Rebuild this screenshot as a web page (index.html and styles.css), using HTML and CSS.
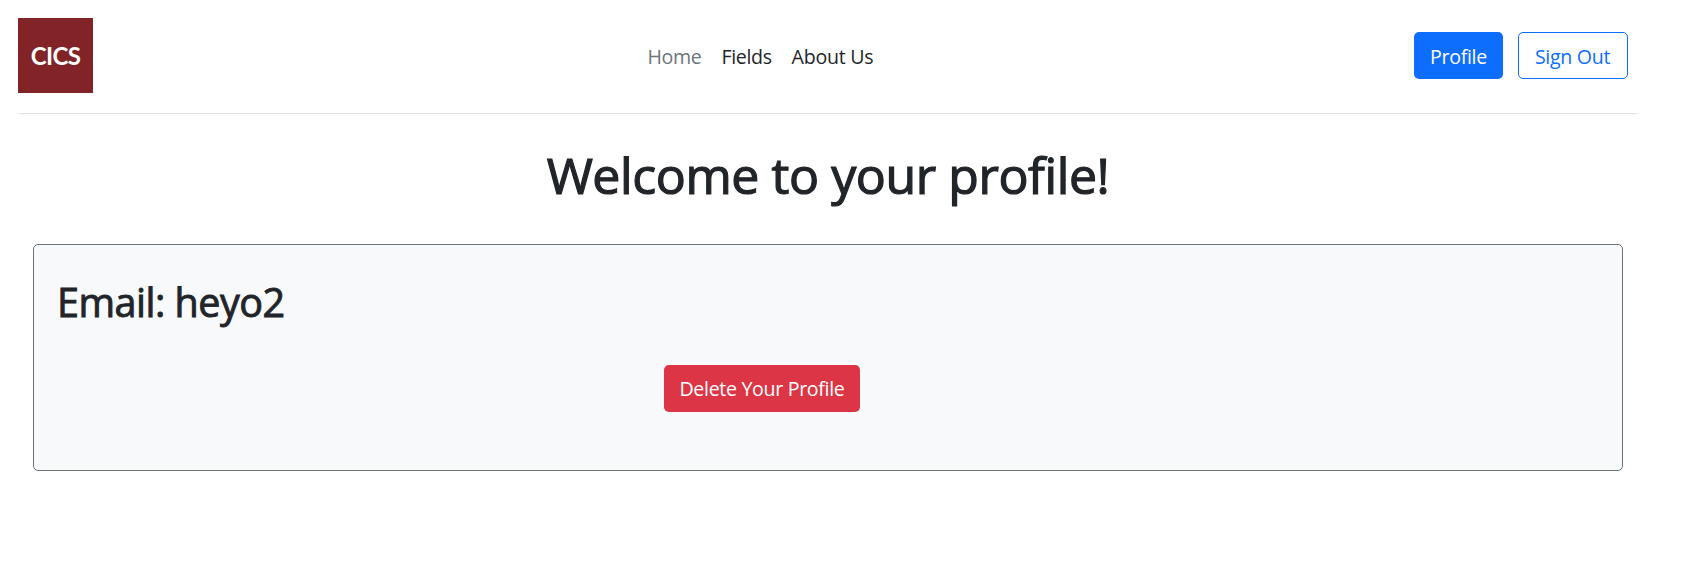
FILE: index.html
```html
<!DOCTYPE html>
<html lang="en">
<head>
<meta charset="utf-8">
<title>Profile</title>
<link rel="stylesheet" href="styles.css">
</head>
<body>
<header class="header">
  <a class="logo"><span>CICS</span></a>
  <nav class="nav">
    <a class="link link-home">Home</a>
    <a class="link link-fields">Fields</a>
    <a class="link link-about">About Us</a>
  </nav>
  <div class="actions">
    <button class="btn btn-primary">Profile</button>
    <button class="btn btn-outline">Sign Out</button>
  </div>
</header>
<main class="main">
  <h1 class="title">Welcome to your profile!</h1>
  <section class="card">
    <h2 class="email">Email: heyo2</h2>
    <button class="btn btn-danger">Delete Your Profile</button>
  </section>
</main>
</body>
</html>
```
FILE: styles.css
```css
* { box-sizing: border-box; }
body {
  margin: 0;
  padding: 18px 61px 0 18px;
  background: #fff;
  color: #212529;
  font-family: "Open Sans", "Noto Sans", sans-serif;
  font-size: 19.6px;
  line-height: 30px;
}
.header {
  display: grid;
  grid-template-columns: 629.5px 1fr auto;
  align-items: center;
  height: 96px;
  padding: 0 10px 20px 0;
  border-bottom: 1px solid #dee2e6;
}
.logo {
  display: flex;
  align-items: center;
  justify-content: center;
  width: 75px;
  height: 75px;
  background: #822427;
  color: #fff;
  font-family: Lato, sans-serif;
  font-size: 24px;
  font-weight: 700;
  letter-spacing: -0.6px;
}
.nav { display: flex; padding-top: 3px; }
.link { white-space: nowrap; letter-spacing: -0.35px; }
.link-home { width: 74px; color: #6c757d; }
.link-fields { width: 70px; }
.link-about { letter-spacing: -0.25px; }
.actions { display: flex; gap: 15px; }
.btn {
  height: 47px;
  padding: 2px 0 0;
  border: 1px solid transparent;
  border-radius: 5px;
  color: #fff;
  font: inherit;
  letter-spacing: -0.32px;
  white-space: nowrap;
}
.btn-primary { width: 89px; background: #0d6efd; }
.btn-outline { width: 110px; padding-right: 1px; background: #fff; border-color: #0d6efd; color: #0d6efd; }
.btn-danger { display: block; width: 196px; margin: 39px 0 0 607px; padding-top: 0; background: #dc3545; }
.main { padding: 31px 15px 0; }
.title {
  margin: 0 0 39px;
  text-align: center;
  font-size: 50px;
  line-height: 60px;
  font-weight: 500;
  letter-spacing: -0.42px;
  white-space: nowrap;
  -webkit-text-stroke: 1.2px currentColor;
}
.card {
  height: 227px;
  padding: 33px 23px 0;
  border: 1px solid #6c757d;
  border-radius: 5px;
  background: #f8f9fb;
}
.email {
  margin: 0;
  font-size: 39.5px;
  line-height: 48px;
  font-weight: 500;
  letter-spacing: -0.5px;
  -webkit-text-stroke: 0.9px currentColor;
}
```
